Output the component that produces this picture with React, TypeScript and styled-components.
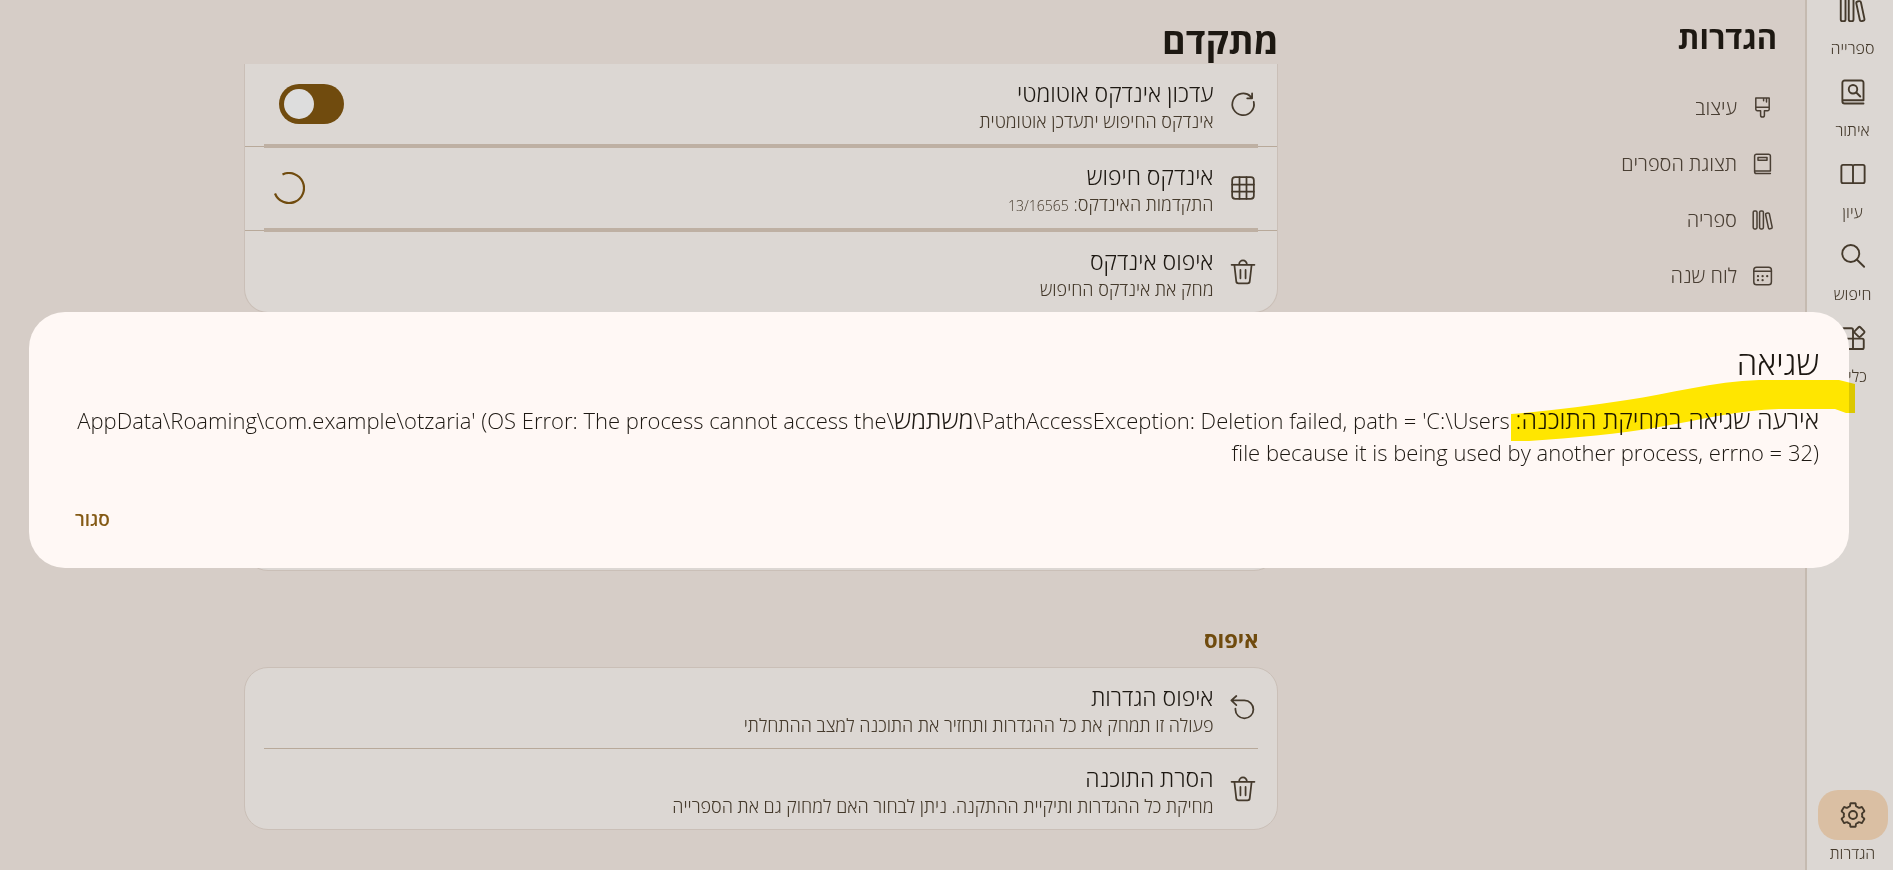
import React from "react";
import styled, { createGlobalStyle, css } from "styled-components";

const GlobalStyle = createGlobalStyle`
  *, *::before, *::after { box-sizing: border-box; }
  html, body { margin: 0; background: #d6cdc7; }
  body, button, input {
    font-family: "Open Sans", "Noto Sans", sans-serif;
    font-weight: 300;
  }
`;

/* ---------- icons ---------- */

const Svg = styled.svg<{ $size: number }>`
  width: ${(p) => p.$size}px;
  height: ${(p) => p.$size}px;
  flex: none;
  display: block;
  fill: none;
  stroke: currentColor;
  stroke-width: 1.5;
  stroke-linecap: round;
  stroke-linejoin: round;
`;

type IconName =
  | "library" | "bookSearch" | "bookOpen" | "search" | "apps" | "settings"
  | "brush" | "book" | "calendar" | "refresh" | "grid" | "trash" | "undo";

const gearPath = () => {
  const at = (r: number, deg: number) => {
    const a = ((deg - 90) * Math.PI) / 180;
    return `${(12 + r * Math.cos(a)).toFixed(2)} ${(12 + r * Math.sin(a)).toFixed(2)}`;
  };
  let d = "";
  for (let k = 0; k < 6; k++) {
    const c = k * 60;
    d += `${k === 0 ? "M" : "L"}${at(9.6, c - 11)}L${at(9.6, c + 11)}`;
    d += `Q${at(9.6, c + 14)} ${at(8.6, c + 15)}`;
    d += `Q${at(6.6, c + 20)} ${at(7.5, c + 30)}`;
    d += `Q${at(6.6, c + 40)} ${at(8.6, c + 45)}`;
    d += `Q${at(9.6, c + 46)} ${at(9.6, c + 49)}`;
  }
  return d + "Z";
};

const glyphs: Record<IconName, React.ReactNode> = {
  library: (
    <>
      <rect x="2.2" y="2.9" width="3.8" height="18" rx="1.3" />
      <rect x="8.6" y="2.9" width="3.8" height="18" rx="1.3" />
      <rect x="16" y="4.9" width="3.8" height="16" rx="1.3" transform="rotate(-12 17.9 12.9)" />
    </>
  ),
  bookSearch: (
    <>
      <path d="M20.4 21.2H5.3a1.8 1.8 0 0 1-1.8-1.8V4.6A1.8 1.8 0 0 1 5.3 2.8h13.3A1.8 1.8 0 0 1 20.4 4.6v14H3.6" />
      <circle cx="12" cy="9.8" r="3.4" />
      <path d="M14.6 12.4l3.2 3.2" />
    </>
  ),
  bookOpen: (
    <path d="M12 5.8C12 5 11.5 4.7 10.8 4.7H4A1.3 1.3 0 0 0 2.7 6v12A1.3 1.3 0 0 0 4 19.3h6.8c.7 0 1.2-.3 1.2-1 0 .7.5 1 1.2 1H20a1.3 1.3 0 0 0 1.3-1.3V6A1.3 1.3 0 0 0 20 4.7h-6.8c-.7 0-1.2.3-1.2 1.1v12.5" />
  ),
  search: (
    <>
      <circle cx="10.2" cy="10" r="6.8" />
      <path d="M15.2 15l5.7 5.6" />
    </>
  ),
  apps: (
    <>
      <path d="M12 12.5V5.5A1.3 1.3 0 0 0 10.7 4.2H4.5A1.3 1.3 0 0 0 3.2 5.5V19.5A1.3 1.3 0 0 0 4.5 20.8H19.3A1.3 1.3 0 0 0 20.6 19.5V13.8A1.3 1.3 0 0 0 19.3 12.5ZM3.2 12.5H12V20.8" />
      <rect x="14" y="4" width="6.3" height="6.3" rx="1" transform="rotate(45 17.15 7.15)" />
    </>
  ),
  settings: (
    <>
      <path d={gearPath()} />
      <circle cx="12" cy="12" r="3.2" />
    </>
  ),
  brush: (
    <path d="M4.8 2H18.2V13.2A1.5 1.5 0 0 1 16.7 14.7H13.4V19.2A1.9 1.9 0 0 1 9.6 19.2V14.7H6.3A1.5 1.5 0 0 1 4.8 13.2ZM4.8 11.2H18.2M12.6 2V4.8M15.5 2V6" />
  ),
  book: (
    <path d="M19.4 21.5H5.4A1.8 1.8 0 0 1 3.6 19.7V4A1.8 1.8 0 0 1 5.4 2.2H17.6A1.8 1.8 0 0 1 19.4 4V18.9H3.7M7 5.5H16V8.3H7Z" />
  ),
  calendar: (
    <>
      <rect x="2.8" y="3.2" width="17.6" height="17.6" rx="2.8" />
      <path d="M2.8 7.2H20.4" />
      <path strokeWidth="2.3" d="M7 12.2h.01M11.6 12.2h.01M16.2 12.2h.01M7 16.2h.01M11.6 16.2h.01" />
    </>
  ),
  refresh: (
    <path d="M21.2 10.2A9.3 9.3 0 1 1 18.6 5.6L19.8 6.8M19.8 2.9V7.1H15.6M19.8 5.2L18 7" />
  ),
  grid: (
    <>
      <rect x="2.7" y="2.7" width="18.6" height="18.6" rx="2.6" />
      <path d="M9 2.7V21.3M15 2.7V21.3M2.7 9H21.3M2.7 15H21.3" />
    </>
  ),
  trash: (
    <path d="M2.2 5.8H21.8M8.7 5.4A3.3 3.3 0 0 1 15.3 5.4M4.6 5.8L6.2 19.8A2 2 0 0 0 8.2 21.8H15.8A2 2 0 0 0 17.8 19.8L19.4 5.8M9.8 10.2V17.4M14.2 10.2V17.4" />
  ),
  undo: (
    <path d="M6.3 1.7L2 5.5L6.3 9.5M2.2 5.5H13.2A7.7 7.7 0 1 1 5.5 13.2V12.5" />
  ),
};

const Icon = ({ name, size }: { name: IconName; size: number }) => (
  <Svg $size={size} viewBox="0 0 24 24" aria-hidden="true">{glyphs[name]}</Svg>
);

/* ---------- shell ---------- */

const Shell = styled.div`
  position: relative;
  display: flex;
  height: 100vh;
  overflow: hidden;
  background: #d6cdc7;
  color: #1d1812;
`;

const Rail = styled.nav`
  flex: none;
  width: 88px;
  display: flex;
  flex-direction: column;
  justify-content: space-between;
  overflow: hidden;
  background: #dcd7d3;
  border-left: 2px solid #c5bab0;
  padding-left: 5px;
`;

const RailList = styled.div`
  display: flex;
  flex-direction: column;
  margin-top: -15px;
`;

const RailButton = styled.button<{ $last?: boolean }>`
  display: flex;
  flex-direction: column;
  align-items: center;
  height: ${(p) => (p.$last ? 80 : 82)}px;
  padding: 0;
  border: 0;
  background: none;
  color: #453a2c;
  font-size: 16px;
  line-height: 26px;
  cursor: pointer;
`;

const Pill = styled.span<{ $active?: boolean }>`
  display: flex;
  align-items: center;
  justify-content: center;
  width: 70px;
  height: 50px;
  border-radius: 20px;
  ${(p) => p.$active && css`background: #dabfa3;`}
`;

const Sidebar = styled.aside`
  flex: none;
  width: 283px;
  padding: 15px 28px 0;
`;

const SidebarTitle = styled.h1`
  margin: 0 0 21px;
  font-size: 31px;
  line-height: 44px;
  font-weight: 700;
`;

const SidebarLink = styled.a`
  display: flex;
  align-items: center;
  gap: 14px;
  height: 56px;
  padding-right: 2px;
  color: #4a3f34;
  font-size: 20px;
  line-height: 28px;
  text-decoration: none;
`;

const Main = styled.main`
  flex: 1;
  min-width: 0;
  display: flex;
  flex-direction: column;
`;

const Column = styled.div`
  width: 68%;
  margin: 0 auto;
`;

const MainTitle = styled.h2`
  margin: 0;
  padding-top: 16px;
  height: 64px;
  font-size: 36px;
  line-height: 49px;
  font-weight: 700;
`;

const Card = styled.section<{ $cut?: boolean; $filler?: boolean }>`
  background: #dcd7d3;
  border: 1px solid #cabfb7;
  border-radius: 24px;
  ${(p) => p.$cut && css`border-top: 0; border-radius: 0 0 24px 24px;`}
  ${(p) => p.$filler && css`height: 220px; margin-top: 38px;`}
`;

const SectionTitle = styled.h3`
  margin: 52px 20px 12px;
  font-size: 22px;
  line-height: 32px;
  font-weight: 700;
  color: #704b0e;
`;

const Row = styled.div`
  display: flex;
  align-items: center;
  gap: 16px;
  height: 80px;
  padding: 0 20px 0 28px;
  color: #453a2c;
`;

const RowText = styled.div`
  flex: 1;
  min-width: 0;
  padding-top: 4px;
`;

const RowTitle = styled.div`
  font-size: 23px;
  line-height: 30px;
  color: #1d1812;
`;

const RowNote = styled.div`
  font-size: 18px;
  line-height: 26px;
`;

const Count = styled.bdi`
  font-size: 14px;
`;

const Divider = styled.hr<{ $strong?: boolean }>`
  margin: 0 19px;
  border: 0;
  height: 1px;
  background: #b8a99a;
  ${(p) => p.$strong && css`
    height: 4px;
    margin: 0;
    padding: 0 19px;
    background: linear-gradient(transparent 2px, #b8a99a 2px, #b8a99a 3px, transparent 3px);
    &::after {
      content: "";
      display: block;
      height: 4px;
      background: #beb0a3;
    }
  `}
`;

const Switch = styled.input`
  appearance: none;
  flex: none;
  display: flex;
  align-items: center;
  width: 65px;
  height: 40px;
  margin: 0 0 0 6px;
  padding: 0 5px;
  border-radius: 20px;
  background: #704b0e;
  cursor: pointer;
  &::before {
    content: "";
    width: 30px;
    height: 30px;
    border-radius: 50%;
    background: #dddddd;
  }
  &:checked { justify-content: flex-end; }
`;

const Spinner = styled.svg`
  flex: none;
  width: 32px;
  height: 32px;
  fill: none;
  stroke: #704b0e;
  stroke-width: 2.2;
`;

/* ---------- dialog ---------- */

const Dialog = styled.section`
  position: absolute;
  top: 312px;
  left: 29px;
  right: 44px;
  padding: 30px 30px 26px;
  border-radius: 36px;
  background: #fff8f5;
`;

const DialogTitle = styled.h2`
  margin: 0 0 20px;
  font-size: 33px;
  line-height: 42px;
  font-weight: 300;
`;

const Message = styled.p`
  margin: 0 0 28px;
  font-size: 22px;
  line-height: 32px;
`;

const Hebrew = styled.span`
  font-size: 25px;
  line-height: 1;
`;

const CloseButton = styled.button`
  padding: 8px 16px;
  border: 0;
  background: none;
  color: #855b16;
  font-size: 19px;
  line-height: 30px;
  font-weight: 600;
  cursor: pointer;
`;

const Actions = styled.div`
  display: flex;
  justify-content: flex-end;
`;

const Marker = styled.svg`
  position: absolute;
  top: 66px;
  right: -6px;
  width: 346px;
  height: 64px;
  fill: #ffed00;
  mix-blend-mode: multiply;
  pointer-events: none;
`;

const railItems: { icon: IconName; label: string }[] = [
  { icon: "library", label: "ספרייה" },
  { icon: "bookSearch", label: "איתור" },
  { icon: "bookOpen", label: "עיון" },
  { icon: "search", label: "חיפוש" },
  { icon: "apps", label: "כלים" },
];

const sidebarItems: { icon: IconName; label: string }[] = [
  { icon: "brush", label: "עיצוב" },
  { icon: "book", label: "תצוגת הספרים" },
  { icon: "library", label: "ספריה" },
  { icon: "calendar", label: "לוח שנה" },
];

type SettingProps = {
  icon: IconName;
  title: string;
  note: React.ReactNode;
  children?: React.ReactNode;
};

const Setting = ({ icon, title, note, children }: SettingProps) => (
  <Row>
    <Icon name={icon} size={28} />
    <RowText>
      <RowTitle>{title}</RowTitle>
      <RowNote>{note}</RowNote>
    </RowText>
    {children}
  </Row>
);

export default function App() {
  return (
    <Shell dir="rtl" lang="he">
      <GlobalStyle />
      <Rail>
        <RailList>
          {railItems.map((item) => (
            <RailButton key={item.label} type="button">
              <Pill><Icon name={item.icon} size={30} /></Pill>
              {item.label}
            </RailButton>
          ))}
        </RailList>
        <RailButton type="button" aria-current="page" $last>
          <Pill $active><Icon name="settings" size={30} /></Pill>
          הגדרות
        </RailButton>
      </Rail>

      <Sidebar>
        <SidebarTitle>הגדרות</SidebarTitle>
        {sidebarItems.map((item) => (
          <SidebarLink key={item.label} href="#">
            <Icon name={item.icon} size={24} />
            {item.label}
          </SidebarLink>
        ))}
      </Sidebar>

      <Main>
        <Column>
          <MainTitle>מתקדם</MainTitle>
          <Card $cut>
            <Setting icon="refresh" title="עדכון אינדקס אוטומטי" note="אינדקס החיפוש יתעדכן אוטומטית">
              <Switch type="checkbox" role="switch" defaultChecked aria-label="עדכון אינדקס אוטומטי" />
            </Setting>
            <Divider $strong />
            <Setting icon="grid" title="אינדקס חיפוש" note={<>התקדמות האינדקס: <Count>13/16565</Count></>}>
              <Spinner viewBox="0 0 32 32" aria-hidden="true">
                <path d="M9.5 2.5A15 15 0 1 1 2 21.5" />
              </Spinner>
            </Setting>
            <Divider $strong />
            <Setting icon="trash" title="איפוס אינדקס" note="מחק את אינדקס החיפוש" />
          </Card>
          <Card $filler />
          <SectionTitle>איפוס</SectionTitle>
          <Card>
            <Setting icon="undo" title="איפוס הגדרות" note="פעולה זו תמחק את כל ההגדרות ותחזיר את התוכנה למצב ההתחלתי" />
            <Divider />
            <Setting icon="trash" title="הסרת התוכנה" note="מחיקת כל ההגדרות ותיקיית ההתקנה. ניתן לבחור האם למחוק גם את הספרייה" />
          </Card>
        </Column>
      </Main>

      <Dialog role="alertdialog" aria-labelledby="dialog-title">
        <DialogTitle id="dialog-title">שגיאה</DialogTitle>
        <Message>
          <Hebrew>אירעה שגיאה במחיקת התוכנה:</Hebrew>
          {" PathAccessException: Deletion failed, path = 'C:\\Users\\"}
          <Hebrew>משתמש</Hebrew>
          {"\\AppData\\Roaming\\com.example\\otzaria' (OS Error: The process cannot access the "}
          {"file because it is being used by another process, errno = 32)"}
        </Message>
        <Actions>
          <CloseButton type="button">סגור</CloseButton>
        </Actions>
        <Marker viewBox="0 0 346 64" aria-hidden="true">
          <path d="M2 36C40 33 80 28 118 22C160 16 205 3 250 2H330L346 6V35H337L326 31H270C230 32 190 42 150 49C110 56 65 60 20 63H2Z" />
        </Marker>
      </Dialog>
    </Shell>
  );
}
